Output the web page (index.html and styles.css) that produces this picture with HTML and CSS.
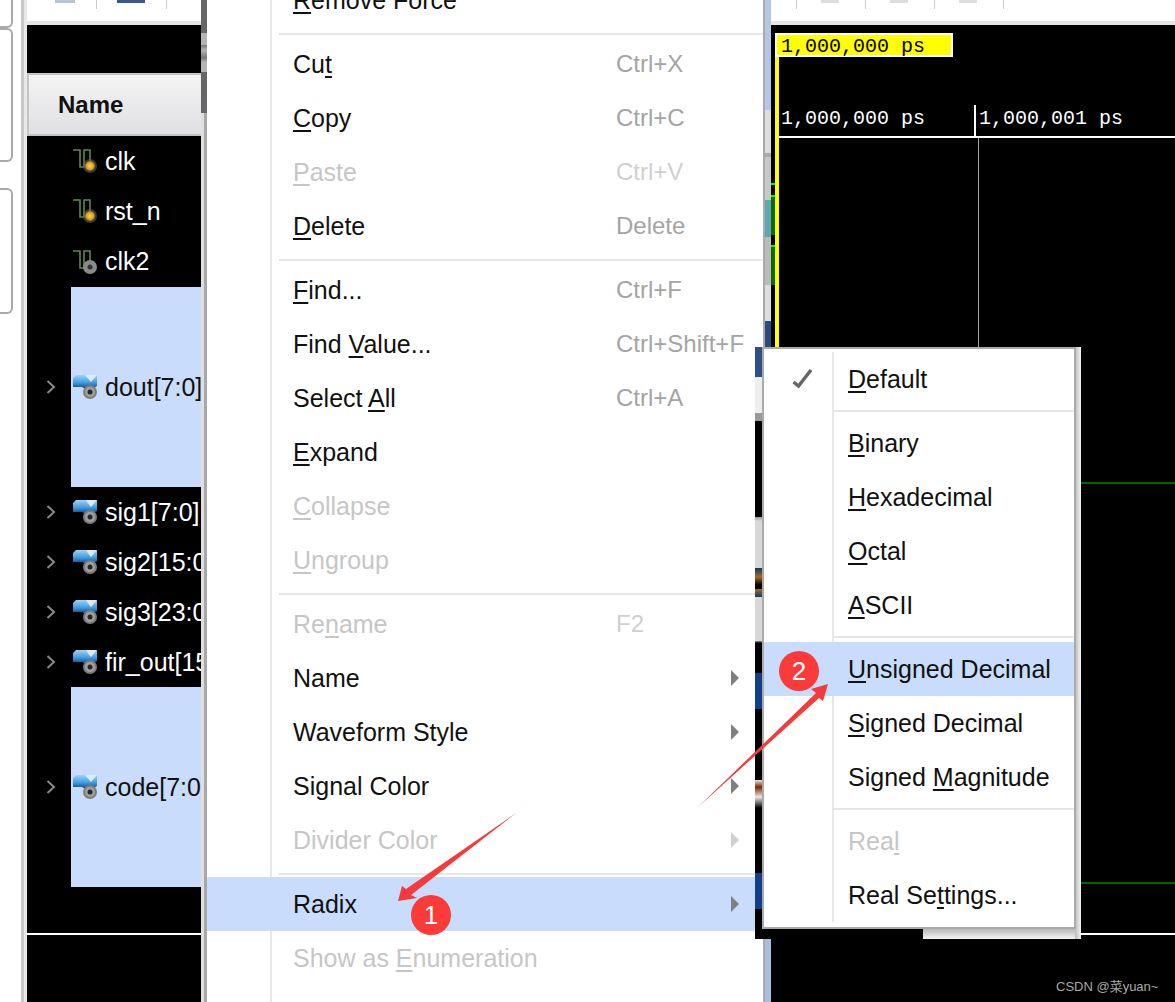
FILE: index.html
```html
<!DOCTYPE html>
<html lang="en">
<head>
    <meta charset="UTF-8">
    <meta name="viewport" content="width=device-width, initial-scale=1.0">
    <title>Waveform Radix Menu</title>
    <link rel="stylesheet" href="styles.css">
</head>
<body>
    <svg class="defs" width="0" height="0">
        <defs>
            <linearGradient id="busBlue" x1="0" y1="0" x2="0" y2="1">
                <stop offset="0" stop-color="#9fd4f5"/>
                <stop offset="0.55" stop-color="#3f9be0"/>
                <stop offset="1" stop-color="#0d3f7a"/>
            </linearGradient>
            <radialGradient id="gold">
                <stop offset="0" stop-color="#f7d878"/>
                <stop offset="0.7" stop-color="#e0a010"/>
                <stop offset="1" stop-color="#8a6a20"/>
            </radialGradient>
            <symbol id="chevron" viewBox="0 0 10 14">
                <path d="M1.5 1 L8 7 L1.5 13" fill="none" stroke="#8a8a8a" stroke-width="2"/>
            </symbol>
            <symbol id="clockIcon" viewBox="0 0 24 24">
                <path d="M0 1 H7 V18 H11 V1 H17 V16" fill="none" stroke="#5c8a4c" stroke-width="1.6"/>
                <circle cx="17" cy="17" r="7" fill="#6a6a6a" opacity="0.55"/>
                <circle cx="17" cy="17" r="5" fill="url(#gold)"/>
            </symbol>
            <symbol id="clockIconOff" viewBox="0 0 24 24">
                <path d="M0 1 H7 V18 H11 V1 H17 V16" fill="none" stroke="#5c8a4c" stroke-width="1.6"/>
                <circle cx="17" cy="17" r="7" fill="#8a8a8a"/>
                <circle cx="17" cy="17" r="2.5" fill="#333"/>
            </symbol>
            <symbol id="busIcon" viewBox="0 0 24 24">
                <path d="M0 3 L3 0 H12 L17 5 L24 0 V11 L19 14 H12 L9 12 H0 Z" fill="url(#busBlue)"/>
                <path d="M12 0 L18 7 L24 0 Z" fill="#dceaf5"/>
                <circle cx="17" cy="17" r="7" fill="#7d7d7d"/>
                <circle cx="17" cy="17" r="5" fill="#a0a0a0"/>
                <circle cx="17" cy="17" r="2.5" fill="#262626"/>
            </symbol>
        </defs>
    </svg>

    <div class="screen">
        <div class="gutter">
            <div class="tab tab-a"></div>
            <div class="tab tab-b"></div>
            <div class="tab tab-c"></div>
        </div>
        <div class="divider"></div>

        <div class="names">
            <div class="toolbar names-tools">
                <span class="tool-mark"></span>
                <span class="tick tick-one"></span>
                <span class="tool-blue"></span>
                <span class="tick tick-two"></span>
            </div>
            <div class="tool-rule"></div>
            <div class="names-gap"></div>
            <div class="names-header">Name</div>

            <div class="row">
                <span class="twist"></span>
                <span class="cell"><svg class="icon"><use href="#clockIcon"/></svg>clk</span>
            </div>
            <div class="row">
                <span class="twist"></span>
                <span class="cell"><svg class="icon"><use href="#clockIcon"/></svg>rst_n</span>
            </div>
            <div class="row">
                <span class="twist"></span>
                <span class="cell"><svg class="icon"><use href="#clockIconOff"/></svg>clk2</span>
            </div>
            <div class="row row-tall">
                <span class="twist"><svg class="chevron"><use href="#chevron"/></svg></span>
                <span class="cell selected"><svg class="icon"><use href="#busIcon"/></svg>dout[7:0]</span>
            </div>
            <div class="row">
                <span class="twist"><svg class="chevron"><use href="#chevron"/></svg></span>
                <span class="cell"><svg class="icon"><use href="#busIcon"/></svg>sig1[7:0]</span>
            </div>
            <div class="row">
                <span class="twist"><svg class="chevron"><use href="#chevron"/></svg></span>
                <span class="cell"><svg class="icon"><use href="#busIcon"/></svg>sig2[15:0]</span>
            </div>
            <div class="row">
                <span class="twist"><svg class="chevron"><use href="#chevron"/></svg></span>
                <span class="cell"><svg class="icon"><use href="#busIcon"/></svg>sig3[23:0]</span>
            </div>
            <div class="row">
                <span class="twist"><svg class="chevron"><use href="#chevron"/></svg></span>
                <span class="cell"><svg class="icon"><use href="#busIcon"/></svg>fir_out[15:0]</span>
            </div>
            <div class="row row-tall">
                <span class="twist"><svg class="chevron"><use href="#chevron"/></svg></span>
                <span class="cell selected"><svg class="icon"><use href="#busIcon"/></svg>code[7:0]</span>
            </div>
            <div class="names-rule"></div>
        </div>

        <div class="scroll"><div class="scroll-thumb"></div></div>

        <div class="menu">
            <div class="item"><span class="label"><u>R</u>emove Force</span></div>
            <div class="sep"></div>
            <div class="item"><span class="label">Cu<u>t</u></span><span class="keys">Ctrl+X</span></div>
            <div class="item"><span class="label"><u>C</u>opy</span><span class="keys">Ctrl+C</span></div>
            <div class="item off"><span class="label"><u>P</u>aste</span><span class="keys">Ctrl+V</span></div>
            <div class="item"><span class="label"><u>D</u>elete</span><span class="keys">Delete</span></div>
            <div class="sep"></div>
            <div class="item"><span class="label"><u>F</u>ind...</span><span class="keys">Ctrl+F</span></div>
            <div class="item"><span class="label">Find <u>V</u>alue...</span><span class="keys">Ctrl+Shift+F</span></div>
            <div class="item"><span class="label">Select <u>A</u>ll</span><span class="keys">Ctrl+A</span></div>
            <div class="item"><span class="label"><u>E</u>xpand</span></div>
            <div class="item off"><span class="label"><u>C</u>ollapse</span></div>
            <div class="item off"><span class="label"><u>U</u>ngroup</span></div>
            <div class="sep"></div>
            <div class="item off"><span class="label">Re<u>n</u>ame</span><span class="keys">F2</span></div>
            <div class="item has-sub"><span class="label">Name</span></div>
            <div class="item has-sub"><span class="label">Waveform Style</span></div>
            <div class="item has-sub"><span class="label">Signal Color</span></div>
            <div class="item has-sub off"><span class="label">Divider Color</span></div>
            <div class="sep"></div>
            <div class="item has-sub active"><span class="label">Radix</span></div>
            <div class="item off"><span class="label">Show as <u>E</u>numeration</span></div>
        </div>

        <div class="side-strip"></div>

        <div class="wave">
            <div class="toolbar wave-tools">
                <span class="tick tick-first"></span><span class="faint"></span>
                <span class="tick"></span><span class="faint"></span>
                <span class="tick"></span><span class="faint"></span>
                <span class="tick"></span>
            </div>
            <div class="tool-rule"></div>
            <div class="wave-body">
                <div class="edges"></div>
                <div class="cursor"></div>
                <div class="grid-line"></div>
                <div class="marker">1,000,000 ps</div>
                <div class="ruler">
                    <div class="ruler-cell ruler-first">1,000,000 ps</div>
                    <div class="ruler-cell ruler-next">1,000,001 ps</div>
                </div>
                <div class="trace trace-a"></div>
                <div class="trace trace-b"></div>
                <div class="wave-rule"></div>
            </div>
        </div>

        <div class="submenu-wrap">
            <div class="submenu">
                <div class="item sub-item">
                    <svg class="check" viewBox="0 0 20 20"><path d="M1.5 13 L6.5 17 L19 1" fill="none" stroke="#666" stroke-width="3.4"/></svg>
                    <span class="label"><u>D</u>efault</span>
                </div>
                <div class="sep sub-sep"></div>
                <div class="item sub-item"><span class="label"><u>B</u>inary</span></div>
                <div class="item sub-item"><span class="label"><u>H</u>exadecimal</span></div>
                <div class="item sub-item"><span class="label"><u>O</u>ctal</span></div>
                <div class="item sub-item"><span class="label"><u>A</u>SCII</span></div>
                <div class="sep sub-sep"></div>
                <div class="item sub-item active"><span class="label"><u>U</u>nsigned Decimal</span></div>
                <div class="item sub-item"><span class="label"><u>S</u>igned Decimal</span></div>
                <div class="item sub-item"><span class="label">Signed <u>M</u>agnitude</span></div>
                <div class="sep sub-sep"></div>
                <div class="item sub-item off"><span class="label">Rea<u>l</u></span></div>
                <div class="item sub-item"><span class="label">Real Se<u>t</u>tings...</span></div>
            </div>
        </div>

        <svg class="arrows" viewBox="0 0 1175 1002">
            <polygon points="516,813 411,895 417,898 398,901 402,886 406,889"/>
            <polygon points="697,808 819,698 823,701 828,684 811,689 816,693"/>
        </svg>
        <div class="badge badge-one">1</div>
        <div class="badge badge-two">2</div>
        <div class="watermark">CSDN @菜yuan~</div>
    </div>
</body>
</html>
```

FILE: styles.css
```css
html, body {
    margin: 0;
    padding: 0;
    background-color: #fff;
}
.defs {
    position: absolute;
}
.screen {
    position: relative;
    width: 1175px;
    height: 1002px;
    overflow: hidden;
    display: grid;
    grid-template-columns: 21px 6px 174px 6px 558px 6px 404px;
    grid-template-rows: 1002px;
    font-family: "Liberation Sans", Arial, sans-serif;
    font-size: 25px;
    color: #111;
}

/* left gutter */
.gutter {
    background-color: #fff;
}
.tab {
    width: 11px;
    border: 2px solid #a8a8a8;
    border-left: none;
    border-radius: 0 6px 6px 0;
}
.tab-a {
    height: 40px;
    margin-top: -16px;
}
.tab-b {
    height: 130px;
}
.tab-c {
    height: 122px;
    margin-top: 26px;
}
.divider {
    background: linear-gradient(90deg, #c8c8c8 50%, #e8e8e8 50%);
}

/* toolbars */
.toolbar {
    height: 21px;
    background-color: #fff;
    display: flex;
    align-items: flex-start;
}
.tool-rule {
    height: 4px;
    background-color: #e6e6e6;
}
.tick {
    width: 1px;
    height: 9px;
    background-color: #ccc;
}
.tool-mark {
    width: 20px;
    height: 3px;
    margin-left: 28px;
    background-color: #b9c3d8;
}
.tick-one {
    margin-left: 21px;
}
.tool-blue {
    width: 28px;
    height: 3px;
    margin-left: 20px;
    background-color: #39568f;
}
.tick-two {
    margin-left: 21px;
}
.wave-tools {
    padding-left: 25px;
}
.faint {
    width: 18px;
    height: 3px;
    margin: 0 26px 0 24px;
    background-color: #ddd;
}

/* names column */
.names {
    background-color: #000;
    overflow: hidden;
}
.names-gap {
    height: 48px;
}
.names-header {
    height: 59px;
    line-height: 59px;
    padding-left: 29px;
    border-top: 2px solid #c4c4c4;
    border-bottom: 2px solid #c4c4c4;
    border-left: 2px solid #c4c4c4;
    background: linear-gradient(#f3f3f3, #e0e0e4);
    font-size: 24px;
    font-weight: bold;
    color: #111;
}
.row {
    height: 50px;
    display: flex;
    white-space: nowrap;
    color: #fff;
}
.row:nth-of-type(7) {
    height: 51px;
}
.row-tall {
    height: 200px;
}
.twist {
    flex: 0 0 44px;
    display: flex;
    align-items: center;
    justify-content: flex-end;
    padding-right: 15px;
    box-sizing: border-box;
}
.chevron {
    width: 10px;
    height: 14px;
}
.cell {
    flex: 1;
    display: flex;
    align-items: center;
    padding-left: 2px;
}
.cell.selected {
    background-color: #c9dcfb;
    color: #111;
}
.icon {
    width: 24px;
    height: 24px;
    margin-right: 8px;
    flex: none;
}
.names-rule {
    height: 2px;
    margin-top: 46px;
    background-color: #fff;
}

/* scrollbar next to the names */
.scroll {
    background: linear-gradient(90deg, #e0e0e0 50%, #a8a8a8 50%);
}
.scroll-thumb {
    height: 113px;
    background: linear-gradient(#666 33px, #b4b4b4 33px, #b4b4b4 45px, #777 45px, #b4b4b4 50px, #777 58px, #b4b4b4 62px, #b4b4b4 72px, #666 72px);
}

/* context menu */
.menu {
    position: relative;
    align-self: start;
    min-height: 1029px;
    margin-top: -27px;
    box-sizing: border-box;
    border-right: 2px solid #aaa;
    background-color: #fff;
}
.menu::before {
    content: "";
    position: absolute;
    left: 63px;
    top: 0;
    bottom: 0;
    width: 2px;
    background-color: #e8e8e8;
}
.item {
    position: relative;
    height: 54px;
    display: flex;
    align-items: center;
    padding-left: 86px;
    white-space: nowrap;
}
.label {
    flex: 0 0 323px;
}
.label u {
    text-decoration-thickness: 2px;
    text-underline-offset: 3px;
    text-decoration-skip-ink: none;
}
.keys {
    font-size: 24px;
    color: #a4a4a4;
}
.item.off {
    color: #c6c6c6;
}
.item.off .keys {
    color: #cfcfcf;
}
.item.active {
    background-color: #c9dcfb;
}
.has-sub::after {
    content: "";
    position: absolute;
    left: 524px;
    top: 19px;
    border-left: 8px solid #808080;
    border-top: 8px solid transparent;
    border-bottom: 8px solid transparent;
}
.has-sub.off::after {
    border-left-color: #cfcfcf;
}
.sep {
    position: relative;
    height: 10px;
}
.sep::after {
    content: "";
    position: absolute;
    left: 72px;
    right: 0;
    top: 6px;
    height: 2px;
    background-color: #e6e6e6;
}

/* strip between the menu and the waves */
.side-strip {
    background: linear-gradient(#b3c6e6 110px, #ddd 110px, #ddd 153px, #aaa 153px, #aaa 157px, #c8c8c8 157px, #c8c8c8 200px, #5fa7b0 200px, #5fa7b0 237px, #bbb 237px, #bbb 285px, #ddd 285px, #ddd 321px, #2c4a80 321px, #2c4a80 347px, #a9bede 347px);
}

/* wave view */
.wave {
    background-color: #000;
}
.wave-body {
    position: relative;
    padding-top: 8px;
}
.edges {
    position: absolute;
    left: 0;
    top: 0;
    width: 4px;
    height: 322px;
    background: linear-gradient(#000 158px, #0f0 158px, #0f0 160px, #000 160px, #000 170px, #0f0 170px, #0f0 172px, #0a6a0a 172px, #0a6a0a 210px, #000 210px, #000 220px, #0f0 220px, #0f0 222px, #0a6a0a 222px, #0a6a0a 260px, #000 260px);
}
.cursor {
    position: absolute;
    left: 4px;
    top: 32px;
    width: 4px;
    height: 290px;
    background-color: #ff0;
}
.grid-line {
    position: absolute;
    left: 207px;
    top: 113px;
    width: 1px;
    height: 209px;
    background-color: #aaa;
}
.marker {
    position: relative;
    width: 178px;
    height: 24px;
    margin-left: 4px;
    box-sizing: border-box;
    border: 2px solid #fff;
    padding-left: 4px;
    background-color: #ff0;
    color: #000;
    font-family: "Liberation Mono", monospace;
    font-size: 20px;
    line-height: 24px;
}
.ruler {
    display: flex;
    height: 31px;
    margin-top: 48px;
    border-bottom: 2px solid #fff;
    color: #fff;
    font-family: "Liberation Mono", monospace;
    font-size: 20px;
    line-height: 28px;
}
.ruler-cell {
    padding-left: 3px;
    white-space: nowrap;
}
.ruler-first {
    width: 203px;
    padding-left: 10px;
    box-sizing: border-box;
    margin-right: -3px;
    flex: 0 0 206px;
}
.ruler-next {
    border-left: 2px solid #fff;
}
.trace {
    height: 2px;
    background-color: #006400;
}
.trace-a {
    margin-top: 344px;
}
.trace-b {
    margin-top: 398px;
}
.wave-rule {
    height: 2px;
    margin-top: 49px;
    background-color: #fff;
}

/* radix submenu */
.submenu-wrap {
    position: absolute;
    left: 755px;
    top: 347px;
    width: 326px;
    height: 592px;
    background:
        linear-gradient(#2f4f86 30px, #eee 30px, #eee 66px, #999 66px, #999 74px, #000 74px, #000 170px, #999 170px, #d8d8d8 174px, #d8d8d8 221px, #0b3a66 221px, #a66a20 230px, #000 238px, #000 242px, #a66a20 242px, #0b3a66 250px, #d8d8d8 250px, #d8d8d8 294px, #999 294px, #000 296px, #000 326px, #123f8c 326px, #123f8c 362px, #000 362px, #000 433px, #e8e8e8 433px, #7a2a00 440px, #e8e8e8 450px, #000 461px, #000 526px, #123f8c 526px, #123f8c 562px, #000 562px) left top / 7px 100% no-repeat,
        linear-gradient(90deg, #bbb, #f4f4f4) right top / 6px 100% no-repeat,
        linear-gradient(#b8b8b8, #f4f4f4) right bottom / 158px 10px no-repeat,
        #000;
}
.submenu {
    position: absolute;
    left: 7px;
    top: 0;
    width: 314px;
    height: 582px;
    box-sizing: border-box;
    border: 2px solid #aaa;
    padding-top: 3px;
    background-color: #fff;
}
.submenu::before {
    content: "";
    position: absolute;
    left: 68px;
    top: 3px;
    bottom: 5px;
    width: 2px;
    background-color: #e8e8e8;
}
.sub-item {
    padding-left: 84px;
}
.sub-sep::after {
    left: 70px;
    top: 4px;
}
.check {
    position: absolute;
    left: 28px;
    top: 17px;
    width: 20px;
    height: 20px;
}

/* annotations */
.arrows {
    position: absolute;
    left: 0;
    top: 0;
    width: 1175px;
    height: 1002px;
}
.arrows polygon {
    fill: #f43a3a;
}
.badge {
    position: absolute;
    width: 40px;
    height: 40px;
    border-radius: 50%;
    background-color: #fb3a3a;
    color: #fff;
    font-size: 26px;
    line-height: 40px;
    text-align: center;
}
.badge-one {
    left: 411px;
    top: 895px;
}
.badge-two {
    left: 779px;
    top: 651px;
}
.watermark {
    position: absolute;
    left: 1056px;
    top: 976px;
    color: #a8a8a8;
    font-family: "Liberation Sans", "Noto Sans CJK SC", sans-serif;
    font-size: 13px;
}
```
